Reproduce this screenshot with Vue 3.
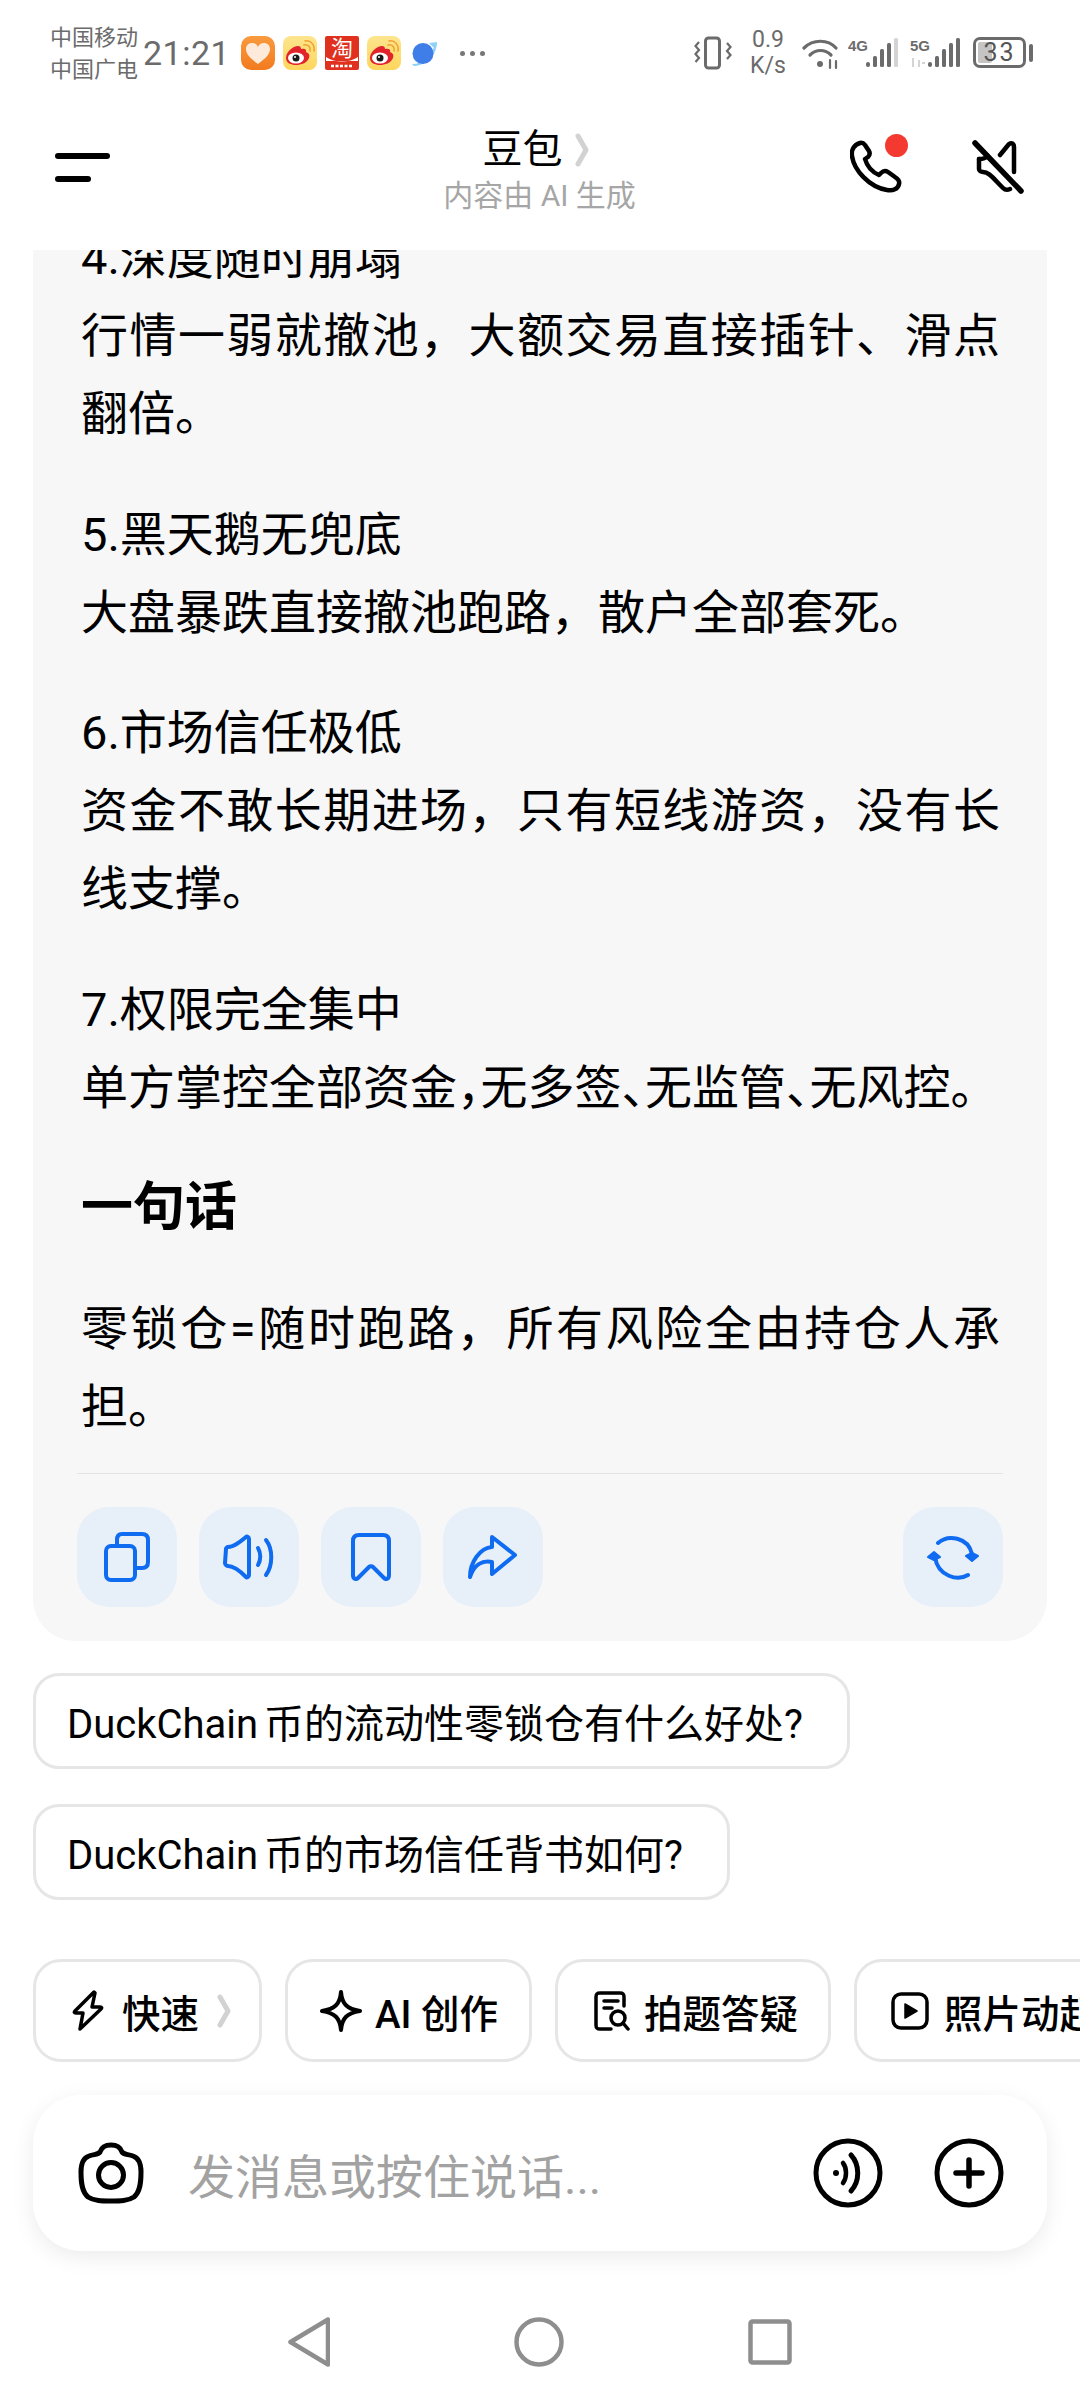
<template>
  <div class="page">
    <div class="statusbar">
      <div class="carrier">
        <span>中国移动</span>
        <span>中国广电</span>
      </div>
      <span class="time">21:21</span>
      <div class="apps">
        <div class="app heart">
          <svg viewBox="0 0 34 34" width="34" height="34">
            <path d="M17 28 C9 22 5 18 5 13 C5 9 8 7 11 7 C14 7 16 8.500 17 11 C18 8.500 20 7 23 7 C26 7 29 9 29 13 C29 18 25 22 17 28 Z" fill="#fdeadb" />
          </svg>
        </div>
        <div class="app weibo">
          <svg viewBox="0 0 34 34" width="34" height="34">
            <path d="M3 22 C3 16 10 10 15 10 C17 10 18 11 18 13 C21 12 24 13 23 16 C26 17 27 19 26 22 C24 27 18 29 13 29 C8 29 3 27 3 22 Z" fill="#e3232c" />
            <ellipse cx="13" cy="22" rx="8" ry="5.500" fill="#fff" />
            <circle cx="13" cy="22" r="3.500" fill="#1a1a1a" />
            <circle cx="12" cy="21" r="1" fill="#fff" />
            <path d="M21 9 C25 8 28 11 27 15 M22 5 C28 4 32 9 31 15" fill="none" stroke="#f0a030" stroke-width="1.500" stroke-linecap="round" />
          </svg>
        </div>
        <div class="app taobao">
          <svg viewBox="0 0 34 34" width="34" height="34">
            <text x="17" y="20" text-anchor="middle" class="taoText">淘</text>
            <path d="M1 21 C10 27 24 27 33 21 L33 25 L1 25 Z" fill="#fff" />
            <path d="M6 30 H28" stroke="#fff" stroke-width="2.500" stroke-dasharray="3 1.500" />
          </svg>
        </div>
        <div class="app weibo">
          <svg viewBox="0 0 34 34" width="34" height="34">
            <path d="M3 22 C3 16 10 10 15 10 C17 10 18 11 18 13 C21 12 24 13 23 16 C26 17 27 19 26 22 C24 27 18 29 13 29 C8 29 3 27 3 22 Z" fill="#e3232c" />
            <ellipse cx="13" cy="22" rx="8" ry="5.500" fill="#fff" />
            <circle cx="13" cy="22" r="3.500" fill="#1a1a1a" />
            <circle cx="12" cy="21" r="1" fill="#fff" />
            <path d="M21 9 C25 8 28 11 27 15 M22 5 C28 4 32 9 31 15" fill="none" stroke="#f0a030" stroke-width="1.500" stroke-linecap="round" />
          </svg>
        </div>
        <svg class="planet" viewBox="0 0 28 28" width="28" height="28">
          <path d="M2 25 C10 26 21 17 26 4 L27 3 C27 13 20 26 4 27 Z" fill="#8fd0f7" />
          <path d="M19 4 L27 3 L25 10 Z" fill="#8fd0f7" />
          <circle cx="13" cy="14.500" r="10.500" fill="#3f7de8" />
        </svg>
        <div class="dots"><i></i><i></i><i></i></div>
      </div>

      <div class="sys">
        <svg class="vib" viewBox="0 0 38 34" width="38" height="34" fill="none" stroke="#6b6b6b">
          <rect x="11.500" y="2" width="14" height="30" rx="3" stroke-width="3" />
          <path d="M5 6 L1.500 10 L5 14 L1.500 18 L5 22 L1.500 26 M33 7 L36.500 11 L33 15 L36.500 19 L33 23" stroke-width="2.200" />
        </svg>
        <div class="speed">
          <span>0.9</span>
          <span>K/s</span>
        </div>
        <svg class="wifi" viewBox="0 0 38 34" width="38" height="34" fill="none" stroke="#6b6b6b" stroke-width="3.200" stroke-linecap="round">
          <path d="M2 12 C11 3 26 3 34 12" />
          <path d="M8 19 C14 13 23 13 29 19" />
          <circle cx="18" cy="28" r="3" fill="#6b6b6b" stroke="none" />
          <path d="M28 24 V32 M34 25 V32" stroke-width="2.200" />
        </svg>
        <svg class="sig4" viewBox="0 0 50 34" width="50" height="34">
          <text x="0" y="15" class="net">4G</text>
          <g fill="#6b6b6b">
            <rect x="18" y="26" width="4" height="5" rx="2" />
            <rect x="25" y="20" width="4" height="11" rx="1.500" />
            <rect x="32" y="13" width="4" height="18" rx="1.500" />
            <rect x="39" y="7" width="4" height="24" rx="1.500" />
          </g>
          <rect x="46" y="2" width="4" height="29" rx="1.500" fill="#d4d4d4" />
        </svg>
        <svg class="sig5" viewBox="0 0 50 34" width="50" height="34">
          <text x="0" y="15" class="net">5G</text>
          <path d="M3 22 V31 M9 24 V31 M12 27 H15" stroke="#d4d4d4" stroke-width="2" fill="none" />
          <g fill="#6b6b6b">
            <rect x="18" y="26" width="4" height="5" rx="2" />
            <rect x="25" y="20" width="4" height="11" rx="1.500" />
            <rect x="32" y="13" width="4" height="18" rx="1.500" />
            <rect x="39" y="7" width="4" height="24" rx="1.500" />
            <rect x="46" y="2" width="4" height="29" rx="1.500" />
          </g>
        </svg>
        <div class="battery">
          <div class="batteryBody">
            <div class="batteryFill"></div>
            <span>33</span>
          </div>
          <div class="batteryNub"></div>
        </div>
      </div>
    </div>

    <header class="header">
      <div class="menu"><i></i><i class="short"></i></div>
      <div class="titleBox">
        <div class="title">
          <span>豆包</span>
          <svg viewBox="0 0 14 34" width="14" height="34">
            <path d="M3 3 L11 17 L3 31" fill="none" stroke="#d2d2d2" stroke-width="5" stroke-linecap="round" stroke-linejoin="round" />
          </svg>
        </div>
        <div class="subtitle">内容由 AI 生成</div>
      </div>
      <div class="headerIcons">
        <div class="phone">
          <svg viewBox="0 0 52 54" width="52" height="54" fill="none" stroke="#000" stroke-width="4.500" stroke-linejoin="round">
            <path d="M10 3 C4 5 1 10 2 16 C4 30 19 47 37 50 C43 51 48 49 49 44 C50 41 48 39 45 37 L38 32 C35 30 33 31 31 33 L29 35 C22 32 17 26 15 19 L18 17 C20 15 20 13 19 11 L15 5 C13.500 3 12 2.500 10 3 Z" />
          </svg>
          <span class="redDot"></span>
        </div>
        <svg viewBox="0 0 52 54" width="52" height="54" fill="none" stroke="#000" stroke-width="4.500" stroke-linecap="round" stroke-linejoin="round">
          <path d="M28 15 L37 4 C40 2 42 4 42 7 V32 M7 19 V29 C7 31 9 32 11 32 C17 32 21 38 31 48 C33 50 36 50 38 49" />
          <path d="M3 3 L49 51" stroke-width="5.500" />
          <path d="M7 19 C11 19 14 18 16 16" />
        </svg>
      </div>
    </header>

    <div class="thread">
      <div class="card">
        <div class="answer">
          <p v-for="item in sections" :key="item.title">
            <span class="block">{{ item.title }}</span>
            <span class="block" :class="{ tight: item.tight }">{{ item.body }}</span>
          </p>
          <h2>一句话</h2>
          <p>零锁仓=随时跑路，所有风险全由持仓人承担。</p>
        </div>
        <div class="actions">
          <button class="action">
            <svg viewBox="0 0 46 50" width="46" height="50" fill="none" stroke="#0f6bf0" stroke-width="4" stroke-linejoin="round">
              <rect x="2" y="14" width="29" height="34" rx="5" />
              <path d="M13 14 V8 C13 4 15 2 18 2 H38 C42 2 44 4 44 8 V30 C44 34 42 36 38 36 H31" />
            </svg>
          </button>
          <button class="action">
            <svg viewBox="0 0 54 46" width="54" height="46" fill="none" stroke="#0f6bf0" stroke-width="4" stroke-linecap="round" stroke-linejoin="round">
              <path d="M4 15 C4 14 5 13 6 13 C12 13 18 8 24 3 C25 2 27 3 27 5 V41 C27 43 25 44 24 43 C18 37 12 32 6 32 C5 32 3 31 3 29 Z" />
              <path d="M36 14 C39 19 39 26 36 31" />
              <path d="M44 6 C51 15 51 31 44 41" />
            </svg>
          </button>
          <button class="action">
            <svg viewBox="0 0 40 48" width="40" height="48" fill="none" stroke="#0f6bf0" stroke-width="4" stroke-linejoin="round">
              <path d="M2 8 C2 4 4 2 8 2 H32 C36 2 38 4 38 8 V42 C38 46 35 47 33 45 L22 34 C21 33 19 33 18 34 L7 45 C5 47 2 46 2 42 Z" />
            </svg>
          </button>
          <button class="action">
            <svg viewBox="0 0 50 46" width="50" height="46" fill="none" stroke="#0f6bf0" stroke-width="4" stroke-linejoin="round" stroke-linecap="round">
              <path d="M2 43 C2 28 12 14 24 13 V3 L47 21 L24 40 V28 C14 26 6 31 2 43 Z" />
            </svg>
          </button>
          <button class="action last">
            <svg viewBox="0 0 54 46" width="54" height="46" fill="none" stroke="#0f6bf0" stroke-width="4" stroke-linecap="round">
              <path d="M12 9 C22 0 42 3 46 20" />
              <path d="M42 42 C32 48 12 44 9 24" transform="translate(0 -1)" />
              <path d="M40 22 L46 27 L52 22 L46 19 Z" fill="#0f6bf0" stroke-width="2" stroke-linejoin="round" />
              <path d="M2 23 L8 18 L14 23 L8 26 Z" fill="#0f6bf0" stroke-width="2" stroke-linejoin="round" />
            </svg>
          </button>
        </div>
      </div>

      <div class="chips">
        <div v-for="q in questions" :key="q" class="chip">{{ q }}</div>
      </div>
    </div>

    <div class="tabs">
      <div class="tab first">
        <svg viewBox="0 0 32 42" width="32" height="42" fill="none" stroke="#000" stroke-width="3.500" stroke-linejoin="round">
          <path d="M22 2 L3 21 C2 22 2 23 4 23 H11 L8 39 L29 19 C30 18 30 17 28 17 H20 L23 3 Z" />
        </svg>
        <span>快速</span>
        <svg viewBox="0 0 14 34" width="14" height="34">
          <path d="M3 3 L11 17 L3 31" fill="none" stroke="#d2d2d2" stroke-width="5" stroke-linecap="round" stroke-linejoin="round" />
        </svg>
      </div>
      <div class="tab second">
        <svg viewBox="0 0 42 42" width="42" height="42" fill="none" stroke="#000" stroke-width="4" stroke-linejoin="round">
          <path d="M21 2 C22 14 27 19 40 21 C27 23 22 28 21 40 C20 28 15 23 2 21 C15 19 20 14 21 2 Z" />
        </svg>
        <span>AI 创作</span>
      </div>
      <div class="tab third">
        <svg viewBox="0 0 36 40" width="36" height="40" fill="none" stroke="#000" stroke-width="3.500" stroke-linecap="round">
          <path d="M17 38 H6 C3 38 2 37 2 34 V6 C2 3 3 2 6 2 H26 C29 2 30 3 30 6 V15" />
          <path d="M10 10 H24 M10 17 H18" />
          <circle cx="24" cy="27" r="7" />
          <path d="M29 32 L34 38" />
        </svg>
        <span>拍题答疑</span>
      </div>
      <div class="tab fourth">
        <svg viewBox="0 0 38 38" width="38" height="38" fill="none" stroke="#000" stroke-width="3.500">
          <rect x="2" y="2" width="34" height="34" rx="8" />
          <path d="M14 12 L26 19 L14 26 Z" fill="#000" stroke-width="1.500" stroke-linejoin="round" />
        </svg>
        <span>照片动起来</span>
      </div>
    </div>

    <div class="composer">
      <svg viewBox="0 0 66 62" width="66" height="62" fill="none" stroke="#000" stroke-width="5">
        <path d="M22 10 C24 4 28 3 33 3 C38 3 42 4 44 10 C46 13 50 12 55 14 C61 16 63 21 63 30 C63 41 62 50 56 55 C50 59 42 59 33 59 C24 59 16 59 10 55 C4 50 3 41 3 30 C3 21 5 16 11 14 C16 12 20 13 22 10 Z" />
        <circle cx="33" cy="33" r="12.500" />
      </svg>
      <span class="placeholder">发消息或按住说话...</span>
      <svg class="voice" viewBox="0 0 70 70" width="70" height="70" fill="none" stroke="#000" stroke-linecap="round">
        <circle cx="35" cy="35" r="32" stroke-width="5" />
        <circle cx="23" cy="35" r="3" fill="#000" stroke="none" />
        <path d="M30 25 C34 30 34 40 30 45" stroke-width="4.500" />
        <path d="M38 17 C47 27 47 43 38 53" stroke-width="5" />
      </svg>
      <svg class="plus" viewBox="0 0 70 70" width="70" height="70" fill="none" stroke="#000" stroke-linecap="round">
        <circle cx="35" cy="35" r="32" stroke-width="5" />
        <path d="M35 22 V48 M22 35 H48" stroke-width="5.500" />
      </svg>
    </div>

    <nav class="navbar">
      <svg viewBox="0 0 42 50" width="42" height="50" fill="none" stroke="#8e8e8e" stroke-width="4.500" stroke-linejoin="round">
        <path d="M40 2.500 V47.500 L2.500 25 Z" />
      </svg>
      <svg viewBox="0 0 50 50" width="50" height="50" fill="none" stroke="#8e8e8e" stroke-width="4.500">
        <circle cx="25" cy="25" r="22.500" />
      </svg>
      <svg viewBox="0 0 44 46" width="44" height="46" fill="none" stroke="#8e8e8e" stroke-width="4.500" stroke-linejoin="round">
        <rect x="2.500" y="2.500" width="39" height="41" rx="2" />
      </svg>
    </nav>
  </div>
</template>

<script setup>
const sections = [
  { title: '4.深度随时崩塌', body: '行情一弱就撤池，大额交易直接插针、滑点翻倍。' },
  { title: '5.黑天鹅无兜底', body: '大盘暴跌直接撤池跑路，散户全部套死。' },
  { title: '6.市场信任极低', body: '资金不敢长期进场，只有短线游资，没有长线支撑。' },
  { title: '7.权限完全集中', body: '单方掌控全部资金，无多签、无监管、无风控。', tight: true },
]

const questions = ['DuckChain 币的流动性零锁仓有什么好处?', 'DuckChain 币的市场信任背书如何?']
</script>

<style>
html, body { margin: 0; background: #fff; }
</style>

<style scoped>
.page {
  width: 1080px;
  height: 2400px;
  overflow: hidden;
  display: flex;
  flex-direction: column;
  background: #fff;
  font-family: Roboto, "Noto Sans CJK SC", sans-serif;
  color: #000;
}

/* status bar */
.statusbar { height: 125px; flex: none; display: flex; align-items: flex-start; padding: 0 47px 0 50px; box-sizing: border-box; color: #6b6b6b; }
.carrier { display: flex; flex-direction: column; font-size: 22px; line-height: 32px; margin-top: 22px; width: 93px; flex: none; }
.time { font-size: 34px; line-height: 40px; margin-top: 33px; letter-spacing: 0.5px; width: 98px; flex: none; }
.apps { display: flex; align-items: center; gap: 8px; margin-top: 36px; }
.app { width: 34px; height: 34px; border-radius: 8px; overflow: hidden; }
.heart { background: linear-gradient(#f99a3e, #f37a1f); border-radius: 10px; }
.weibo { background: linear-gradient(#fde58e, #fdd65c); }
.taobao { background: #e0301e; border-radius: 2px; }
.taoText { font-size: 22px; fill: #fff; font-family: "Noto Sans CJK SC", sans-serif; }
.planet { margin-left: 1px; }
.dots { display: flex; gap: 5px; margin-left: 14px; }
.dots i { width: 5px; height: 5px; border-radius: 50%; background: #777; }
.sys { margin-left: auto; display: flex; align-items: flex-start; margin-top: 36px; }
.speed { display: flex; flex-direction: column; align-items: center; font-size: 23px; line-height: 26px; margin: -9px 0 0 17px; width: 38px; }
.wifi { margin-left: 15px; }
.sig4 { margin-left: 8px; }
.sig5 { margin-left: 12px; }
.net { font-size: 15px; font-weight: 700; fill: #6b6b6b; font-family: "Liberation Sans", sans-serif; }
.battery { display: flex; align-items: center; gap: 3px; margin: 1px 0 0 13px; }
.batteryBody { width: 53px; height: 31px; box-sizing: border-box; border: 3px solid #6b6b6b; border-radius: 7px; position: relative; display: flex; align-items: center; justify-content: center; font-size: 25px; color: #555; letter-spacing: 2px; overflow: hidden; }
.batteryBody span { position: relative; }
.batteryFill { position: absolute; left: 2px; top: 2px; bottom: 2px; width: 14px; background: #c4c4c4; border-radius: 2px; }
.batteryNub { width: 4px; height: 18px; background: #6b6b6b; border-radius: 2px; }

/* header */
.header { height: 125px; flex: none; display: flex; align-items: flex-start; }
.menu { flex: 1 1 0; display: flex; flex-direction: column; gap: 17px; padding: 28px 0 0 55px; }
.menu i { display: block; height: 6px; border-radius: 3px; background: #000; width: 55px; }
.menu i.short { width: 36px; }
.titleBox { flex: none; display: flex; flex-direction: column; align-items: center; }
.title { display: flex; align-items: center; gap: 12px; font-size: 40px; line-height: 50px; margin-left: -8px; }
.subtitle { font-size: 30px; line-height: 40px; color: #a6a6a6; white-space: nowrap; margin-top: 1px; }
.headerIcons { flex: 1 1 0; display: flex; justify-content: flex-end; align-items: flex-start; gap: 70px; padding: 15px 56px 0 0; }
.phone { position: relative; width: 52px; height: 54px; }
.redDot { position: absolute; width: 23px; height: 23px; border-radius: 50%; background: #f43a30; left: 35px; top: -6px; }

/* thread */
.thread { height: 1709px; flex: none; overflow: hidden; }
.card { margin: -31px 33px 0; background: #f7f7f8; border-radius: 0 0 42px 42px; padding: 0 44px 34px 48px; }
.answer { font-size: 47px; line-height: 78px; color: #000; text-align: justify; margin-right: 3px; }
.answer p { margin: 0 0 42.500px; }
.answer p:last-child { margin-bottom: 0; }
.answer h2 { margin: 0 0 42.500px; font-size: 52px; line-height: 78px; font-weight: 700; }
.block { display: block; }
.tight { font-feature-settings: "halt"; }
.actions { display: flex; gap: 22px; margin: 27px 0 0 -4px; padding-top: 33px; border-top: 1.500px solid #e4e4e4; }
.action { width: 100px; height: 100px; border: none; padding: 0; background: #e7eff9; border-radius: 32px; display: flex; align-items: center; justify-content: center; flex: none; }
.action.last { margin-left: auto; }
.chips { display: flex; flex-direction: column; align-items: flex-start; gap: 35px; margin: 32px 33px 0; }
.chip { height: 96px; box-sizing: border-box; border: 3px solid #e6e6e6; border-radius: 26px; padding: 0 44px 0 31px; display: flex; align-items: center; font-size: 40px; word-spacing: -4px; white-space: nowrap; }

/* quick tabs */
.tabs { display: flex; gap: 23px; padding: 0 0 0 33px; flex: none; height: 103px; overflow: hidden; }
.tab { height: 103px; box-sizing: border-box; border: 3px solid #e6e6e6; border-radius: 28px; display: flex; align-items: center; font-size: 38.500px; font-weight: 500; flex: none; white-space: nowrap; }
.first { width: 229px; padding-left: 36px; gap: 18px; }
.second { width: 247px; padding-left: 32px; gap: 13px; }
.third { width: 276px; padding-left: 36px; gap: 14px; }
.fourth { width: 300px; padding-left: 34px; gap: 15px; }

/* composer */
.composer { margin: 33px 33px 0; height: 156px; flex: none; background: #fff; border-radius: 48px; box-shadow: 0 6px 22px rgba(0, 0, 0, 0.08); display: flex; align-items: center; padding: 0 43px 0 45px; }
.placeholder { font-size: 47px; color: #a2a2a2; margin-left: 44px; }
.voice { margin-left: auto; }
.plus { margin-left: 51px; }

/* nav */
.navbar { flex: none; display: flex; justify-content: center; align-items: center; gap: 184px; margin-top: 66px; }
</style>
